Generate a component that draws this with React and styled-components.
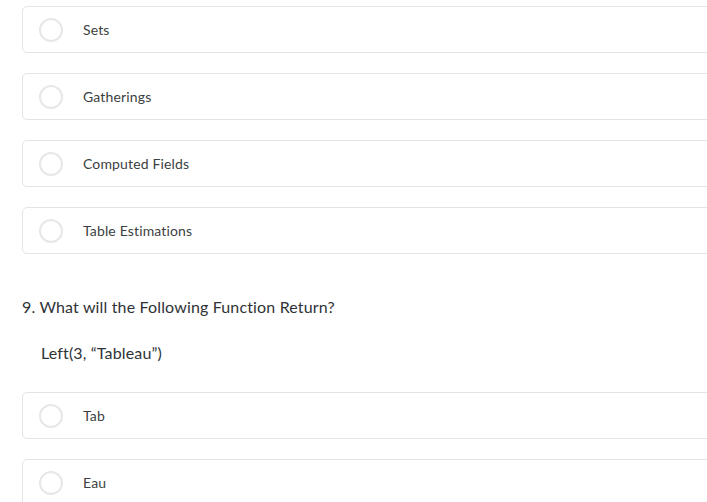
import React from "react";
import styled, { createGlobalStyle } from "styled-components";

const GlobalStyle = createGlobalStyle`
  body {
    margin: 0;
    background: #fff;
    overflow: hidden;
    font-family: Lato, "Liberation Sans", sans-serif;
    font-variant-ligatures: none;
    letter-spacing: 0.15px;
  }
`;

const Page = styled.div`
  padding: 6px 0 0 22px;
  width: 740px;
`;

const OptionList = styled.div`
  display: flex;
  flex-direction: column;
  gap: 20px;
`;

const OptionBox = styled.label`
  display: flex;
  align-items: center;
  height: 45px;
  width: 700px;
  border: 1px solid #e3e5e5;
  border-radius: 5px;
  padding-left: 16px;
  box-sizing: content-box;
  cursor: pointer;
`;

const Radio = styled.span`
  width: 20px;
  height: 20px;
  border: 2px solid #e6e8e8;
  border-radius: 50%;
  flex-shrink: 0;
`;

const OptionText = styled.span`
  margin-left: 20px;
  font-size: 14px;
  color: #3b3f42;
`;

const Question = styled.div`
  margin-top: 41px;
  font-size: 16px;
  line-height: 24px;
  color: #2f3336;
`;

const Code = styled.div`
  margin: 22px 0 27px 19px;
  font-size: 16px;
  line-height: 24px;
  color: #2f3336;
`;

function Option({ label }) {
  return (
    <OptionBox>
      <Radio />
      <OptionText>{label}</OptionText>
    </OptionBox>
  );
}

export default function App() {
  return (
    <>
      <GlobalStyle />
      <Page>
        <OptionList>
          {["Sets", "Gatherings", "Computed Fields", "Table Estimations"].map(
            (o) => (
              <Option key={o} label={o} />
            )
          )}
        </OptionList>
        <Question>9. What will the Following Function Return?</Question>
        <Code>Left(3, “Tableau”)</Code>
        <OptionList>
          {["Tab", "Eau"].map((o) => (
            <Option key={o} label={o} />
          ))}
        </OptionList>
      </Page>
    </>
  );
}
